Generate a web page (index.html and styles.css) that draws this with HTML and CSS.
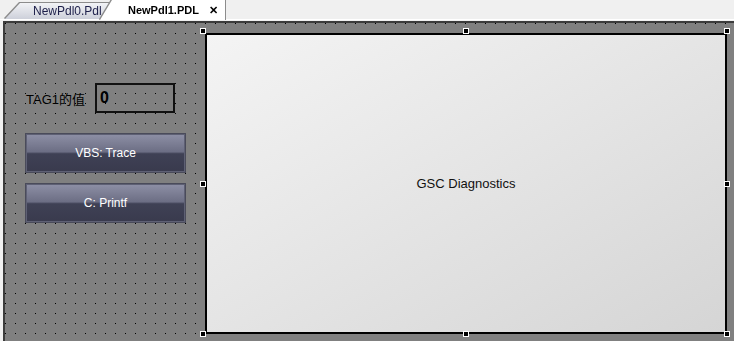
FILE: index.html
```html
<!DOCTYPE html>
<html lang="zh-CN">
  <head>
    <meta charset="utf-8" />
    <title>NewPdl1.PDL</title>
    <link rel="stylesheet" href="styles.css">
  </head>
  <body>
    <div class="tabbar">
      <div class="tab-edge">
        <div class="tab tab-off">NewPdl0.Pdl</div>
      </div>
      <div class="tab-edge front">
        <div class="tab tab-on">NewPdl1.PDL <span class="close">&#x2715;</span></div>
      </div>
    </div>

    <div class="frame">
      <div class="canvas">
        <div class="tools">
          <div class="field">
            <span class="label">TAG1的值</span>
            <div class="value">0</div>
          </div>
          <button class="btn">VBS: Trace</button>
          <button class="btn">C: Printf</button>
        </div>

        <div class="panel">
          GSC Diagnostics
          <span class="handle h-tl"></span>
          <span class="handle h-tm"></span>
          <span class="handle h-tr"></span>
          <span class="handle h-ml"></span>
          <span class="handle h-mr"></span>
          <span class="handle h-bl"></span>
          <span class="handle h-bm"></span>
          <span class="handle h-br"></span>
        </div>
      </div>
    </div>
  </body>
</html>
```

FILE: styles.css
```css
html, body {
  margin: 0;
  height: 100%;
  overflow: hidden;
}
body {
  background-color: #f0f0f0;
  font-family: "Liberation Sans", Arial, sans-serif;
  display: flex;
  flex-direction: column;
}

/* tab strip */
.tabbar {
  height: 20px;
  display: flex;
  align-items: flex-end;
  padding-left: 5px;
  box-sizing: border-box;
  border-bottom: 1px solid #ffffff;
}
.tab-edge {
  filter: drop-shadow(0 -1px 0 #8c8c8c) drop-shadow(1px 0 0 #8c8c8c) drop-shadow(-1px 0 0 #8c8c8c);
}
.tab-edge.front {
  margin-left: -12px;
  margin-bottom: -1px;
}
.tab {
  font-size: 12px;
  white-space: nowrap;
  display: flex;
  align-items: center;
}
.tab-off {
  width: 107px;
  height: 16px;
  padding-left: 28px;
  box-sizing: border-box;
  color: #1d1f4a;
  background: linear-gradient(#f2f3f6, #cdd0da);
  clip-path: polygon(15px 0, 100% 0, 100% 100%, 0 100%);
}
.tab-on {
  width: 125px;
  height: 20px;
  padding-left: 28px;
  box-sizing: border-box;
  font-size: 11px;
  font-weight: bold;
  color: #000;
  background: #ffffff;
  clip-path: polygon(12px 0, 100% 0, 100% 100%, 0 100%);
}
.close {
  margin-left: 10px;
  font-size: 11px;
}

/* editor area */
.frame {
  flex: 1;
  padding: 1px 0 0 3px;
  display: flex;
}
.canvas {
  flex: 1;
  display: flex;
  align-items: flex-start;
  border-top: 2px solid #3c3c3c;
  border-left: 2px solid #3c3c3c;
  padding-top: 10px;
  background-color: #808080;
  background-image: conic-gradient(from 270deg at 1px 1px, #000 90deg, #808080 0);
  background-size: 10px 10px;
  background-position: 0 0;
}

.tools {
  width: 200px;
  flex: none;
  box-sizing: border-box;
  padding: 50px 0 0 20px;
}
.field {
  display: flex;
  align-items: center;
  height: 30px;
}
.label {
  font-size: 13px;
  margin-left: 1px;
  width: 69px;
  font-family: "Liberation Sans", "Noto Sans CJK SC", sans-serif;
}
.value {
  width: 80px;
  height: 30px;
  box-sizing: border-box;
  border: 2px solid #111;
  font-size: 16px;
  font-weight: bold;
  padding-left: 3px;
  display: flex;
  align-items: center;
}
.btn {
  display: block;
  width: 161px;
  height: 40px;
  margin-top: 20px;
  border: 1px solid #4a4b5a;
  box-shadow: inset 0 0 0 1px #5e6074;
  background: linear-gradient(#8e90a6 0%, #6c6e84 47%, #3f4155 52%, #393a4d 100%);
  color: #ffffff;
  font-family: "Liberation Sans", Arial, sans-serif;
  font-size: 12px;
  padding: 0;
}
.btn + .btn {
  margin-top: 10px;
}

.panel {
  position: relative;
  width: 522px;
  height: 301px;
  flex: none;
  box-sizing: border-box;
  border: 2px solid #000;
  background: linear-gradient(to bottom right, #f4f4f4, #d5d5d5);
  font-size: 13px;
  color: #111;
  display: flex;
  align-items: center;
  justify-content: center;
}
.handle {
  position: absolute;
  width: 6px;
  height: 6px;
  box-sizing: border-box;
  border: 1px solid #fff;
  background: #000;
}
.h-tl { left: -7px; top: -7px; }
.h-tm { left: calc(50% - 3px); top: -7px; }
.h-tr { right: -5px; top: -7px; }
.h-ml { left: -7px; top: calc(50% - 3px); }
.h-mr { right: -5px; top: calc(50% - 3px); }
.h-bl { left: -7px; bottom: -5px; }
.h-bm { left: calc(50% - 3px); bottom: -5px; }
.h-br { right: -5px; bottom: -5px; }
```
